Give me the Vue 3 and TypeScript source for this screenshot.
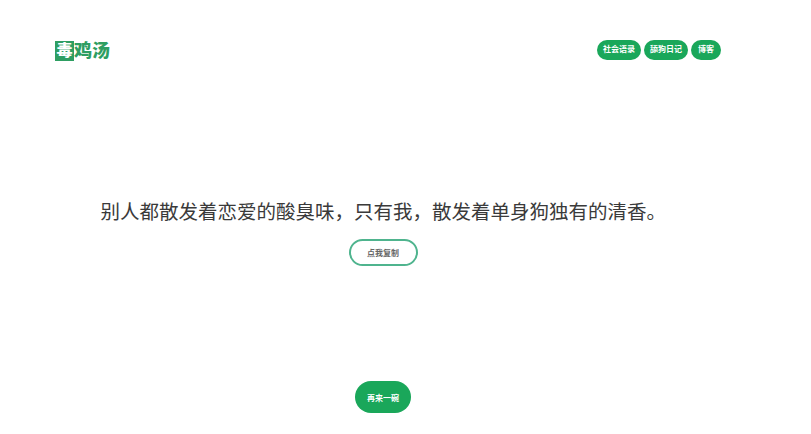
<script setup lang="ts">
const navItems = ['社会语录', '舔狗日记', '博客']
const comma = '\uFF0C'
const sentence = `别人都散发着恋爱的酸臭味${comma}只有我${comma}散发着单身狗独有的清香。`
</script>

<template>
  <div class="page">
    <header class="header">
      <div class="logo">
        <span class="logo__mark">毒</span>
        <span class="logo__text">鸡汤</span>
      </div>
      <nav class="nav">
        <a v-for="item in navItems" :key="item" class="nav__item">{{ item }}</a>
      </nav>
    </header>
    <main class="main">
      <p class="sentence">{{ sentence }}</p>
      <button class="copy">点我复制</button>
    </main>
    <footer class="footer">
      <button class="again">再来一碗</button>
    </footer>
  </div>
</template>

<style>
html,
body {
  margin: 0;
  background: #fff;
}
</style>

<style scoped>
.page {
  width: 811px;
  height: 434px;
  overflow: hidden;
  display: flex;
  flex-direction: column;
  font-family: "Liberation Sans", "Noto Sans CJK SC", sans-serif;
  color: #333;
}

.header {
  height: 21px;
  margin-top: 40px;
  padding: 0 90px 0 55px;
  display: flex;
  justify-content: space-between;
  align-items: center;
}

.logo {
  display: flex;
  align-items: center;
  color: #2e9e62;
  font-weight: 900;
}

.logo__mark {
  width: 19px;
  height: 20px;
  line-height: 20px;
  text-align: center;
  font-size: 16px;
  color: #fff;
  background-color: #2e9e62;
}

.logo__text {
  font-size: 18px;
  line-height: 20px;
}

.nav {
  display: flex;
  gap: 3px;
  margin-top: -1px;
}

.nav__item {
  height: 20px;
  line-height: 20px;
  padding: 0 6px;
  border-radius: 10px;
  background-color: #1aa75a;
  color: #fff;
  font-size: 8px;
  font-weight: 700;
}

.nav__item:last-child {
  padding: 0 7px;
}

.main {
  margin-top: 139px;
  display: flex;
  flex-direction: column;
  align-items: center;
}

.sentence {
  margin: 0;
  width: 580px;
  margin-left: -30px;
  font-size: 19.5px;
  line-height: 24px;
  white-space: nowrap;
  color: #3a3a3a;
}

.copy {
  margin-top: 15px;
  margin-left: -45px;
  width: 69px;
  height: 27px;
  padding: 0;
  border: 2px solid #4fb48e;
  border-radius: 14px;
  background: #fff;
  color: #666;
  font-family: inherit;
  font-size: 8px;
  font-weight: 700;
}

.footer {
  margin-top: 115px;
  display: flex;
  justify-content: center;
}

.again {
  margin-left: -45px;
  width: 56px;
  height: 32px;
  padding: 0;
  border: 0;
  border-radius: 16px;
  background-color: #1aa75a;
  color: #fff;
  font-family: inherit;
  font-size: 8px;
  font-weight: 700;
}
</style>
